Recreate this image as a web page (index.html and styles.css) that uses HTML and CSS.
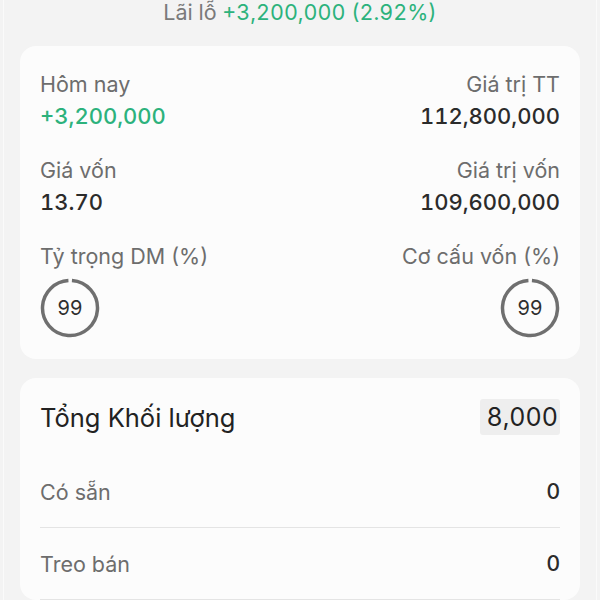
FILE: index.html
```html
<!DOCTYPE html>
<html lang="vi">
<head>
  <meta charset="UTF-8">
  <meta name="viewport" content="width=device-width, initial-scale=1.0">
  <title>Danh mục</title>
  <link rel="stylesheet" href="styles.css">
</head>
<body>
  <div class="page">
    <div class="lai-lo">Lãi lỗ <span class="tang">+3,200,000 (2.92%)</span></div>

    <div class="the tong-quan">
      <div class="o">
        <div class="nhan">Hôm nay</div>
        <div class="gia-tri tang">+3,200,000</div>
      </div>
      <div class="o phai">
        <div class="nhan">Giá trị TT</div>
        <div class="gia-tri">112,800,000</div>
      </div>
      <div class="o">
        <div class="nhan">Giá vốn</div>
        <div class="gia-tri">13.70</div>
      </div>
      <div class="o phai">
        <div class="nhan">Giá trị vốn</div>
        <div class="gia-tri">109,600,000</div>
      </div>
      <div class="o">
        <div class="nhan">Tỷ trọng DM (%)</div>
        <div class="vong">
          <svg width="60" height="60" viewBox="0 0 60 60">
            <circle cx="30" cy="30" r="27.5" fill="none" stroke="#6f6f6f" stroke-width="3.5" stroke-dasharray="169 4" transform="rotate(-86 30 30)"/>
          </svg>
          <span>99</span>
        </div>
      </div>
      <div class="o phai">
        <div class="nhan">Cơ cấu vốn (%)</div>
        <div class="vong">
          <svg width="60" height="60" viewBox="0 0 60 60">
            <circle cx="30" cy="30" r="27.5" fill="none" stroke="#6f6f6f" stroke-width="3.5" stroke-dasharray="169 4" transform="rotate(-86 30 30)"/>
          </svg>
          <span>99</span>
        </div>
      </div>
    </div>

    <div class="the khoi-luong">
      <div class="tieu-de">
        <span>Tổng Khối lượng</span>
        <span class="hop-so">8,000</span>
      </div>
      <div class="dong">
        <span class="nhan">Có sẵn</span>
        <span class="so">0</span>
      </div>
      <div class="dong">
        <span class="nhan">Treo bán</span>
        <span class="so">0</span>
      </div>
    </div>
  </div>
</body>
</html>
```

FILE: styles.css
```css
/* Trang danh muc */
body {
  margin: 0;
  background: #f3f3f3;
  font-family: Inter, 'Noto Sans', sans-serif;
  color: #2b2b2b;
}

.page {
  height: 600px;
  overflow: hidden;
  border-left: 1px solid #fafafa;
  border-right: 1px solid #fafafa;
  margin: 0 3px;
  padding: 0 16px;
}

.lai-lo {
  text-align: center;
  font-size: 21.5px;
  line-height: 24px;
  color: #7a7a7a;
  height: 46px;
  font-variant-numeric: tabular-nums;
}

.tang {
  color: #2cb27c;
}

.the {
  background: #fcfcfc;
  border-radius: 16px;
}

.tong-quan {
  display: grid;
  grid-template-columns: 1fr 1fr;
  row-gap: 26px;
  padding: 24px 20px 21px;
}

.o {
  display: flex;
  flex-direction: column;
  gap: 4px;
}

.o.phai {
  align-items: flex-end;
}

.nhan {
  font-size: 21.5px;
  line-height: 28px;
  color: #6d6d6d;
}

.gia-tri {
  font-size: 22px;
  line-height: 28px;
  font-weight: 500;
  color: #2b2b2b;
  font-variant-numeric: tabular-nums;
}

.gia-tri.tang {
  color: #2cb27c;
}

.vong {
  position: relative;
  width: 60px;
  height: 60px;
  margin-top: 4px;
}

.vong svg {
  display: block;
}

.vong span {
  position: absolute;
  inset: 0;
  display: flex;
  align-items: center;
  justify-content: center;
  font-size: 20px;
  color: #2f2f2f;
}

.khoi-luong {
  margin-top: 19px;
  padding: 21px 20px 0;
}

.tieu-de {
  display: flex;
  justify-content: space-between;
  align-items: center;
  font-size: 25.5px;
  color: #222;
  margin-bottom: 21px;
}

.hop-so {
  background: #eeeeee;
  border-radius: 3px;
  line-height: 36px;
  padding: 0 2px;
  min-width: 76px;
  text-align: right;
  font-size: 25px;
  font-variant-numeric: tabular-nums;
}

.dong {
  display: flex;
  justify-content: space-between;
  align-items: center;
  height: 71px;
  border-bottom: 1px solid #e4e4e4;
}

.dong .so {
  font-size: 21px;
  font-weight: 500;
  color: #2b2b2b;
}
```
